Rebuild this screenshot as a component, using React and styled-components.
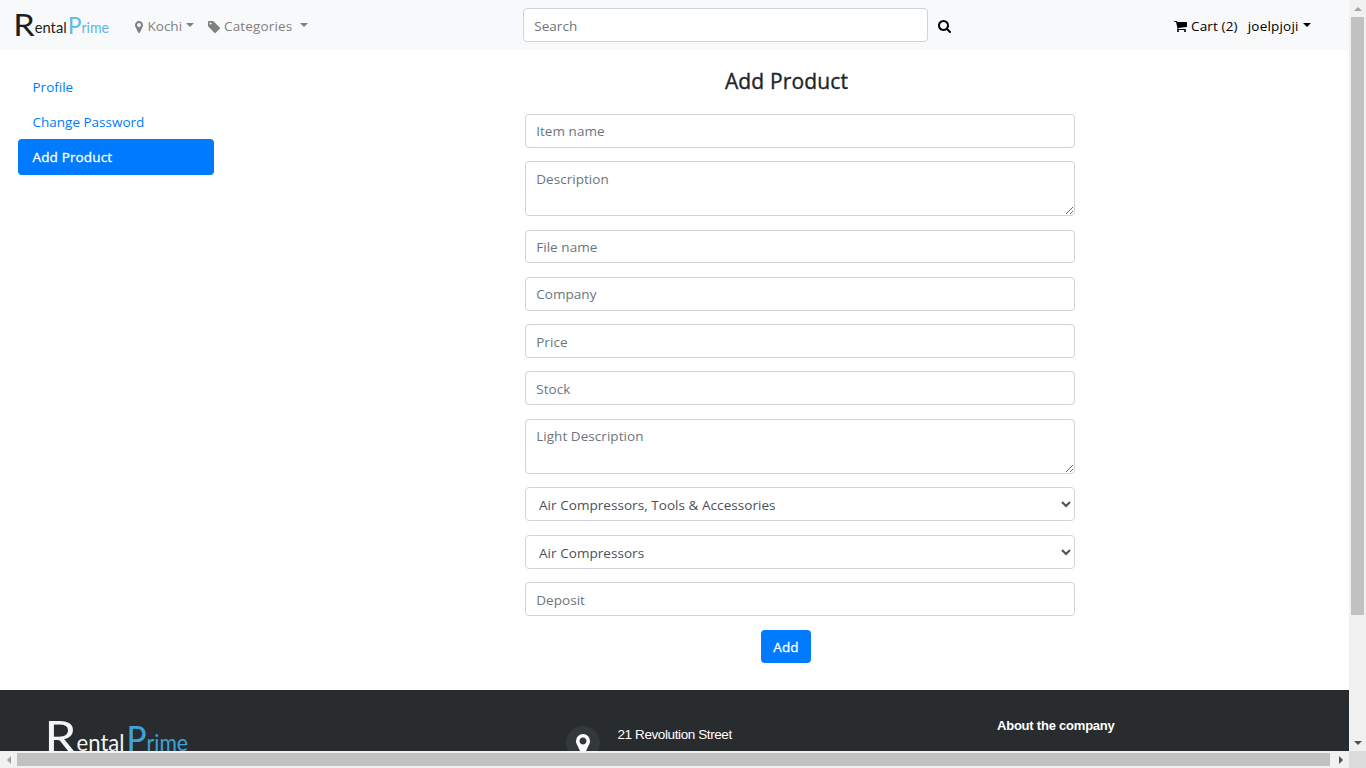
import React from "react";
import styled, { createGlobalStyle, css } from "styled-components";

const GlobalStyle = createGlobalStyle`
  *, *::before, *::after { box-sizing: border-box; }
  html, body { margin: 0; padding: 0; overflow: hidden; background: #fff; }
  body {
    font-family: "Open Sans", "Noto Sans", sans-serif;
    font-size: 13.5px;
    line-height: 21.6px;
    color: #212529;
  }
  a { text-decoration: none; color: inherit; }
`;

const Window = styled.div`
  display: grid;
  grid-template-columns: 1349px 17px;
  grid-template-rows: 751px 17px;
  width: 1366px;
  height: 768px;
  overflow: hidden;
`;

const Page = styled.div`
  display: flex;
  flex-direction: column;
  overflow: hidden;
  background: #fff;
`;

/* Header */

const Navbar = styled.header`
  display: flex;
  align-items: center;
  flex: 0 0 50px;
  height: 50px;
  padding: 0 36px 0 15px;
  background: #f8f9fa;
`;

const NavGroup = styled.nav`
  display: flex;
  align-items: center;
  width: ${(p) => p.$width || "auto"};
  margin-left: ${(p) => p.$offset || 0}px;
  margin-top: 3px;
`;

const NavLink = styled.a`
  display: flex;
  align-items: center;
  white-space: nowrap;
  color: ${(p) => (p.$dark ? "#000" : "#7f8080")};
  margin-right: ${(p) => p.$gap || 0}px;
  letter-spacing: ${(p) => p.$tracking || 0}px;
`;

const Caret = styled.span`
  margin-left: ${(p) => p.$space || 3}px;
  margin-top: -3px;
  border-top: 4px solid currentColor;
  border-left: 4px solid transparent;
  border-right: 4px solid transparent;
`;

const Glyph = styled.svg`
  display: block;
  flex: none;
  width: ${(p) => p.$w}px;
  height: ${(p) => p.$h}px;
  margin-right: ${(p) => p.$gap || 0}px;
  fill: currentColor;
`;

const SearchButton = styled.button`
  display: flex;
  margin: 2px 0 0 10px;
  padding: 0;
  border: 0;
  background: none;
  color: #000;
`;

/* Form controls */

const control = css`
  display: block;
  flex: none;
  width: ${(p) => p.$width || 550}px;
  height: ${(p) => p.$height || 34}px;
  margin: 0 0 ${(p) => p.$gap || 0}px;
  border: 1px solid #ced4da;
  border-radius: 4px;
  background-color: #fff;
  color: #495057;
  font-family: inherit;
  font-size: 13.5px;
  line-height: 21.6px;
  letter-spacing: 0.05px;
  outline: none;
  &::placeholder { color: #6c757d; opacity: 1; }
`;

const Input = styled.input`
  ${control}
  padding: ${(p) => (p.$raised ? 0 : 2)}px 10.2px 0;
`;

const TextArea = styled.textarea`
  ${control}
  padding: ${(p) => p.$top || 6}px 10.2px 0;
  overflow: hidden;
  resize: vertical;
`;

const Select = styled.select`
  ${control}
  padding: 2px 2px 0 9px;
`;

const SubmitButton = styled.button`
  width: 50px;
  height: 33px;
  margin-right: 28px;
  padding: 1px 0 0;
  border: 0;
  border-radius: 4px;
  background: #007bff;
  color: #fff;
  font-family: inherit;
  font-size: 13.5px;
  letter-spacing: 0.2px;
  -webkit-text-stroke: 0.3px currentColor;
`;

/* Body */

const Content = styled.main`
  display: flex;
  flex: 0 0 640px;
  height: 640px;
`;

const Sidebar = styled.aside`
  display: flex;
  flex-direction: column;
  width: 196px;
  margin: 19px 311px 0 18px;
`;

const SideLink = styled.a`
  display: block;
  height: ${(p) => (p.$active ? 36 : 35)}px;
  padding: 8px 14.5px 0;
  border-radius: 4px;
  background: ${(p) => (p.$active ? "#007bff" : "transparent")};
  color: ${(p) => (p.$active ? "#fff" : "#007bff")};
  letter-spacing: ${(p) => (p.$active ? 0.15 : 0)}px;
  -webkit-text-stroke: ${(p) => (p.$active ? 0.3 : 0)}px currentColor;
`;

const Form = styled.form`
  display: flex;
  flex-direction: column;
  align-items: center;
  width: 550px;
`;

const Title = styled.h1`
  height: 28px;
  margin: 17px 27px 19px 0;
  font-size: 21px;
  font-weight: 500;
  line-height: 28px;
  letter-spacing: 0.15px;
  -webkit-text-stroke: 0.35px currentColor;
  color: #212529;
`;

/* Footer */

const Footer = styled.footer`
  display: flex;
  flex: 1 0 61px;
  height: 61px;
  overflow: hidden;
  background: #292c2f;
  color: #fff;
  font-family: "Liberation Sans", Arial, sans-serif;
`;

const FooterBrand = styled.div`
  width: 519px;
  margin: 29px 0 0 47px;
`;

const Address = styled.div`
  display: flex;
  width: 431px;
  margin-top: 36px;
`;

const PinBadge = styled.span`
  display: flex;
  justify-content: center;
  width: 34px;
  height: 34px;
  padding-top: 8px;
  margin-right: 17.5px;
  border-radius: 50%;
  background: #33383b;
`;

const Street = styled.span`
  margin-top: 1px;
  font-size: 13.5px;
  line-height: 16px;
  letter-spacing: -0.4px;
`;

const About = styled.h2`
  margin: 28px 0 0;
  font-size: 13px;
  line-height: 16px;
  font-weight: 700;
  letter-spacing: -0.22px;
`;

/* Scrollbars */

const ScrollTrack = styled.div`
  display: flex;
  flex-direction: ${(p) => (p.$vertical ? "column" : "row")};
  align-items: center;
  justify-content: space-between;
  background: #f1f1f1;
`;

const ScrollThumb = styled.div`
  flex: none;
  width: ${(p) => p.$w}px;
  height: ${(p) => p.$h}px;
  background: #c1c1c1;
`;

const ScrollArrow = styled.span`
  display: flex;
  align-items: center;
  justify-content: center;
  width: 17px;
  height: 17px;
  flex: none;
  color: ${(p) => (p.$enabled ? "#505050" : "#a3a3a3")};
`;

const ThumbRun = styled.div`
  flex: 1;
  align-self: stretch;
  display: flex;
  flex-direction: ${(p) => (p.$vertical ? "column" : "row")};
  align-items: center;
`;

const ScrollCorner = styled.div`
  background: #dcdcdc;
`;

const icons = {
  pin: {
    box: "384 128 1024 1536",
    d: "M1152 640q0-106-75-181t-181-75-181 75-75 181 75 181 181 75 181-75 75-181zm256 0q0 109-33 179l-364 774q-16 33-47.5 52t-67.5 19-67.5-19-46.5-52l-365-774q-33-70-33-179 0-212 150-362t362-150 362 150 150 362z",
  },
  tag: {
    box: "128 128 1515 1515",
    d: "M576 448q0-53-37.5-90.5t-90.5-37.5-90.5 37.5-37.5 90.5 37.5 90.5 90.5 37.5 90.5-37.5 37.5-90.5zm1067 576q0 53-37 90l-491 492q-39 37-91 37-53 0-90-37l-715-716q-38-37-64.5-101t-26.5-117v-416q0-52 38-90t90-38h416q53 0 117 26.5t102 64.5l715 714q37 39 37 91z",
  },
  search: {
    box: "64 128 1664 1664",
    d: "M1216 832q0-185-131.5-316.5t-316.5-131.5-316.5 131.5-131.5 316.5 131.5 316.5 316.5 131.5 316.5-131.5 131.5-316.5zm512 832q0 52-38 90t-90 38q-54 0-90-38l-343-342q-179 124-399 124-143 0-273.5-55.5t-225-150-150-225-55.5-273.5 55.5-273.5 150-225 225-150 273.5-55.5 273.5 55.5 225 150 150 225 55.5 273.5q0 220-124 399l343 343q37 37 37 90z",
  },
  cart: {
    box: "64 256 1664 1408",
    d: "M704 1536q0 52-38 90t-90 38-90-38-38-90 38-90 90-38 90 38 38 90zm896 0q0 52-38 90t-90 38-90-38-38-90 38-90 90-38 90 38 38 90zm128-1088v512q0 24-16.5 42.5t-40.5 21.5l-1044 122q13 60 13 70 0 16-24 64h920q26 0 45 19t19 45-19 45-45 19h-1024q-26 0-45-19t-19-45q0-11 8-31.5t16-36 21.5-40 15.5-29.5l-177-823h-204q-26 0-45-19t-19-45 19-45 45-19h256q16 0 28.5 6.5t19.5 15.5 13 24.5 8 26 5.5 29.5 4.5 26h1201q26 0 45 19t19 45z",
  },
  up: { box: "0 0 8 4", d: "M0 4L4 0L8 4z" },
  down: { box: "0 0 8 4", d: "M0 0L4 4L8 0z" },
  left: { box: "0 0 4 8", d: "M4 0L0 4L4 8z" },
  right: { box: "0 0 4 8", d: "M0 0L4 4L0 8z" },
};

const Icon = ({ name, w, h, gap }) => (
  <Glyph viewBox={icons[name].box} $w={w} $h={h} $gap={gap} aria-hidden="true">
    <path d={icons[name].d} />
  </Glyph>
);

const LogoArt = styled.svg`
  display: block;
  flex: none;
  width: ${(p) => p.$width}px;
  overflow: visible;
  font-family: Lato, "Open Sans", sans-serif;
`;

const Logo = ({ width, ink, accent, drop = 0 }) => (
  <LogoArt viewBox="0 0 94 24" $width={width}>
    <g fill={ink}>
      <text x="-1.8" y="23.2" fontSize="30.5" fontWeight="400" textLength="21.5" lengthAdjust="spacingAndGlyphs">R</text>
      <text x="19.7" y={20.3 + drop} fontSize="16" textLength="32" lengthAdjust="spacingAndGlyphs">ental</text>
    </g>
    <g fill={accent}>
      <text x="53" y={20.6 + drop} fontSize={23.2 + drop} fontWeight="400" textLength="13.4" lengthAdjust="spacingAndGlyphs">P</text>
      <text x="66.4" y={20.3 + drop} fontSize="16" textLength="27.6" lengthAdjust="spacingAndGlyphs">rime</text>
    </g>
  </LogoArt>
);

const fields = [
  { kind: "input", label: "Item name", gap: 13, raised: true },
  { kind: "area", label: "Description", gap: 14, top: 7 },
  { kind: "input", label: "File name", height: 33, gap: 14, raised: true },
  { kind: "input", label: "Company", gap: 13, raised: true },
  { kind: "input", label: "Price", gap: 13 },
  { kind: "input", label: "Stock", gap: 14 },
  { kind: "area", label: "Light Description", gap: 13 },
  { kind: "select", label: "Air Compressors, Tools & Accessories", gap: 14 },
  { kind: "select", label: "Air Compressors", gap: 13 },
  { kind: "input", label: "Deposit", gap: 14 },
];

const Field = ({ kind, label, height, gap, top, raised }) => {
  if (kind === "area") return <TextArea placeholder={label} $height={55} $gap={gap} $top={top} />;
  if (kind === "select")
    return (
      <Select $gap={gap}>
        <option>{label}</option>
      </Select>
    );
  return <Input placeholder={label} $height={height} $gap={gap} $raised={raised} />;
};

export default function App() {
  return (
    <>
      <GlobalStyle />
      <Window>
        <Page>
          <Navbar>
            <Logo width={94} ink="#1d1f21" accent="#5cb8e6" />
            <NavGroup $width="388px" $offset={26}>
              <NavLink href="#" $gap={14}>
                <Icon name="pin" w={8} h={12} gap={4.5} />
                Kochi
                <Caret $space={4} />
              </NavLink>
              <NavLink href="#" $tracking={0.15}>
                <Icon name="tag" w={12} h={12} gap={4} />
                Categories
                <Caret $space={8} />
              </NavLink>
            </NavGroup>
            <Input placeholder="Search" $width={405} />
            <SearchButton type="button" aria-label="Search">
              <Icon name="search" w={13} h={13} />
            </SearchButton>
            <NavGroup $offset={223}>
              <NavLink href="#" $dark $gap={10} $tracking={0.15}>
                <Icon name="cart" w={13} h={11} gap={4} />
                Cart (2)
              </NavLink>
              <NavLink href="#" $dark $tracking={0.2}>
                joelpjoji
                <Caret $space={4} />
              </NavLink>
            </NavGroup>
          </Navbar>

          <Content>
            <Sidebar>
              <SideLink href="#">Profile</SideLink>
              <SideLink href="#">Change Password</SideLink>
              <SideLink href="#" $active>Add Product</SideLink>
            </Sidebar>
            <Form>
              <Title>Add Product</Title>
              {fields.map((f) => (
                <Field key={f.label} {...f} />
              ))}
              <SubmitButton type="button">Add</SubmitButton>
            </Form>
          </Content>

          <Footer>
            <FooterBrand>
              <Logo width={141} ink="#f4f4f4" accent="#3fa2da" drop={1.2} />
            </FooterBrand>
            <Address>
              <PinBadge>
                <Icon name="pin" w={14} h={21} />
              </PinBadge>
              <Street>21 Revolution Street</Street>
            </Address>
            <About>About the company</About>
          </Footer>
        </Page>

        <ScrollTrack $vertical>
          <ScrollArrow><Icon name="up" w={8} h={4} /></ScrollArrow>
          <ThumbRun $vertical><ScrollThumb $w={13} $h={598} /></ThumbRun>
          <ScrollArrow $enabled><Icon name="down" w={8} h={4} /></ScrollArrow>
        </ScrollTrack>
        <ScrollTrack>
          <ScrollArrow><Icon name="left" w={4} h={8} /></ScrollArrow>
          <ThumbRun><ScrollThumb $w={1313} $h={13} /></ThumbRun>
          <ScrollArrow $enabled><Icon name="right" w={4} h={8} /></ScrollArrow>
        </ScrollTrack>
        <ScrollCorner />
      </Window>
    </>
  );
}
